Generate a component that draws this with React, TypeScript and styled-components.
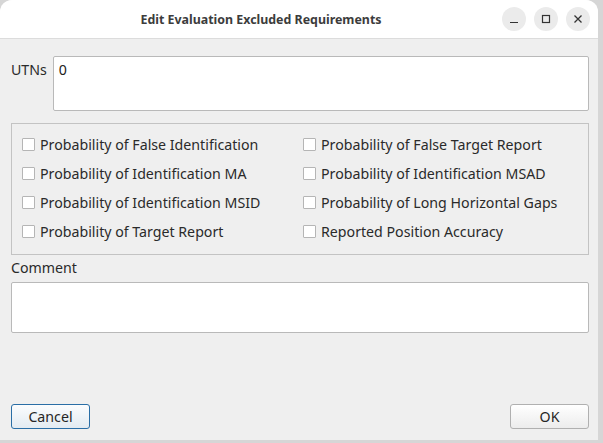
import React from "react";
import styled, { createGlobalStyle } from "styled-components";

const Global = createGlobalStyle`
  html, body { margin: 0; padding: 0; }
  body {
    background: #d6d6d6;
    width: 603px;
    height: 443px;
    overflow: hidden;
    font-family: "Noto Sans", "Open Sans", sans-serif;
  }
`;

const Window = styled.div`
  width: 598px;
  height: 440px;
  background: #efefef;
  border-radius: 12px 12px 0 0;
  overflow: hidden;
  display: flex;
  flex-direction: column;
`;

const TitleBar = styled.div`
  height: 39px;
  background: #ffffff;
  border-bottom: 1px solid #dcdcdc;
  display: flex;
  align-items: center;
  box-sizing: border-box;
`;

const Title = styled.div`
  flex: 1;
  text-align: center;
  padding-left: 20px;
  font-weight: bold;
  font-size: 12.4px;
  color: #3c3c3c;
`;

const Controls = styled.div`
  display: flex;
  gap: 8px;
  padding-right: 8px;
`;

const RoundButton = styled.div`
  width: 24px;
  height: 24px;
  border-radius: 50%;
  background: #ebebeb;
  display: flex;
  align-items: center;
  justify-content: center;
`;

const Body = styled.div`
  flex: 1;
  display: flex;
  flex-direction: column;
  padding: 17px 9px 11px 11px;
`;

const UtnRow = styled.div`
  display: flex;
  gap: 6px;
`;

const Label = styled.div`
  font-size: 14.2px;
  color: #2a2a2a;
  line-height: 18px;
`;

const UtnLabel = styled(Label)`
  padding-top: 5px;
`;

const TextBox = styled.div<{ $h: number }>`
  flex: 1;
  height: ${(p) => p.$h}px;
  background: #fff;
  border: 1px solid #b9b9b9;
  border-radius: 2px;
  box-sizing: border-box;
  padding: 4px 5px;
  font-size: 14.2px;
  color: #202020;
  line-height: 18px;
`;

const Group = styled.div`
  margin-top: 12px;
  height: 132px;
  box-sizing: border-box;
  border: 1px solid #c3c3c3;
  display: grid;
  grid-template-columns: 281px 1fr;
  grid-auto-rows: 29px;
  padding: 6px 0 0 10px;
`;

const CheckItem = styled.label`
  display: flex;
  align-items: center;
  gap: 5px;
  font-size: 14.2px;
  color: #2a2a2a;
`;

const Box = styled.span`
  width: 13px;
  height: 13px;
  box-sizing: border-box;
  border: 1px solid #b5b5b5;
  background: #fff;
  border-radius: 1px;
  flex: none;
`;

const CommentLabel = styled(Label)`
  margin-top: 4px;
  height: 18px;
`;

const CommentBox = styled(TextBox)`
  margin-top: 5px;
  flex: none;
`;

const Footer = styled.div`
  margin-top: auto;
  display: flex;
  justify-content: space-between;
`;

const Button = styled.div<{ $focused?: boolean }>`
  width: 79px;
  height: 25px;
  box-sizing: border-box;
  border: 1px solid ${(p) => (p.$focused ? "#2a6ea6" : "#b0b0b0")};
  border-radius: 3px;
  background: ${(p) =>
    p.$focused
      ? "linear-gradient(#fbfcfd, #e3ebf2)"
      : "linear-gradient(#ffffff, #ececec)"};
  display: flex;
  align-items: center;
  justify-content: center;
  font-size: 14.2px;
  color: #262626;
`;

const left = [
  "Probability of False Identification",
  "Probability of Identification MA",
  "Probability of Identification MSID",
  "Probability of Target Report",
];
const right = [
  "Probability of False Target Report",
  "Probability of Identification MSAD",
  "Probability of Long Horizontal Gaps",
  "Reported Position Accuracy",
];

export default function App() {
  const items: string[] = [];
  for (let i = 0; i < 4; i++) {
    items.push(left[i], right[i]);
  }
  return (
    <>
      <Global />
      <Window>
        <TitleBar>
          <Title>Edit Evaluation Excluded Requirements</Title>
          <Controls>
            <RoundButton>
              <svg width="10" height="10" viewBox="0 0 10 10">
                <line x1="1" y1="8.5" x2="9" y2="8.5" stroke="#333" strokeWidth="1.2" />
              </svg>
            </RoundButton>
            <RoundButton>
              <svg width="10" height="10" viewBox="0 0 10 10">
                <rect x="1.5" y="1.5" width="7" height="7" fill="none" stroke="#333" strokeWidth="1.2" />
              </svg>
            </RoundButton>
            <RoundButton>
              <svg width="10" height="10" viewBox="0 0 10 10">
                <path d="M1.5 1.5 L8.5 8.5 M8.5 1.5 L1.5 8.5" stroke="#333" strokeWidth="1.3" />
              </svg>
            </RoundButton>
          </Controls>
        </TitleBar>
        <Body>
          <UtnRow>
            <UtnLabel>UTNs</UtnLabel>
            <TextBox $h={55}>0</TextBox>
          </UtnRow>
          <Group>
            {items.map((t) => (
              <CheckItem key={t}>
                <Box />
                {t}
              </CheckItem>
            ))}
          </Group>
          <CommentLabel>Comment</CommentLabel>
          <CommentBox $h={51} />
          <Footer>
            <Button $focused>Cancel</Button>
            <Button>OK</Button>
          </Footer>
        </Body>
      </Window>
    </>
  );
}
